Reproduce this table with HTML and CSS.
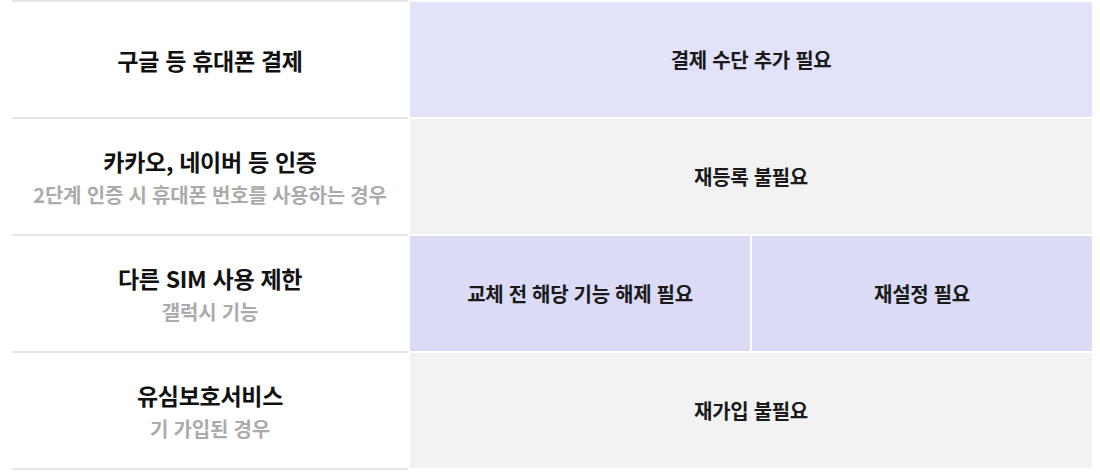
FILE: index.html
```html
<!DOCTYPE html>
<html lang="ko">
<head>
<meta charset="utf-8">
<link rel="stylesheet" href="styles.css">
</head>
<body>
<div class="table">
  <div class="label first">
    <div class="title">구글 등 휴대폰 결제</div>
  </div>
  <div class="value lav first span2">결제 수단 추가 필요</div>

  <div class="label">
    <div class="title">카카오, 네이버 등 인증</div>
    <div class="sub">2단계 인증 시 휴대폰 번호를 사용하는 경우</div>
  </div>
  <div class="value gray span2">재등록 불필요</div>

  <div class="label">
    <div class="title">다른 SIM 사용 제한</div>
    <div class="sub">갤럭시 기능</div>
  </div>
  <div class="value lav2">교체 전 해당 기능 해제 필요</div>
  <div class="value lav2">재설정 필요</div>

  <div class="label">
    <div class="title">유심보호서비스</div>
    <div class="sub">기 가입된 경우</div>
  </div>
  <div class="value gray span2">재가입 불필요</div>
</div>
</body>
</html>
```
FILE: styles.css
```css
* { box-sizing: border-box; }
body {
  margin: 0;
  background: #fff;
  font-family: "Noto Sans CJK KR", "Noto Sans", sans-serif;
}
.table {
  display: grid;
  grid-template-columns: 396px 1fr 1fr;
  column-gap: 2px;
  margin: 0 8px 0 12px;
}
.label {
  height: 117px;
  border-bottom: 2px solid #e5e5e5;
  display: flex;
  flex-direction: column;
  align-items: center;
  justify-content: center;
  gap: 4px;
}
.label.first {
  height: 119px;
  border-top: 2px solid #e5e5e5;
}
.title {
  font-size: 23px;
  font-weight: 700;
  color: #111;
  letter-spacing: -0.3px;
  line-height: 32px;
}
.sub {
  font-size: 20px;
  font-weight: 700;
  color: #ababab;
  letter-spacing: -0.2px;
  line-height: 28px;
}
.value {
  height: 115px;
  margin-bottom: 2px;
  display: flex;
  align-items: center;
  justify-content: center;
  font-size: 20px;
  font-weight: 700;
  color: #1a1a1a;
  letter-spacing: -0.3px;
}
.value.first { margin-top: 2px; }
.span2 { grid-column: span 2; }
.lav { background: #e2e3fa; }
.lav2 { background: #dbdbf6; }
.gray { background: #f2f2f2; }
```
